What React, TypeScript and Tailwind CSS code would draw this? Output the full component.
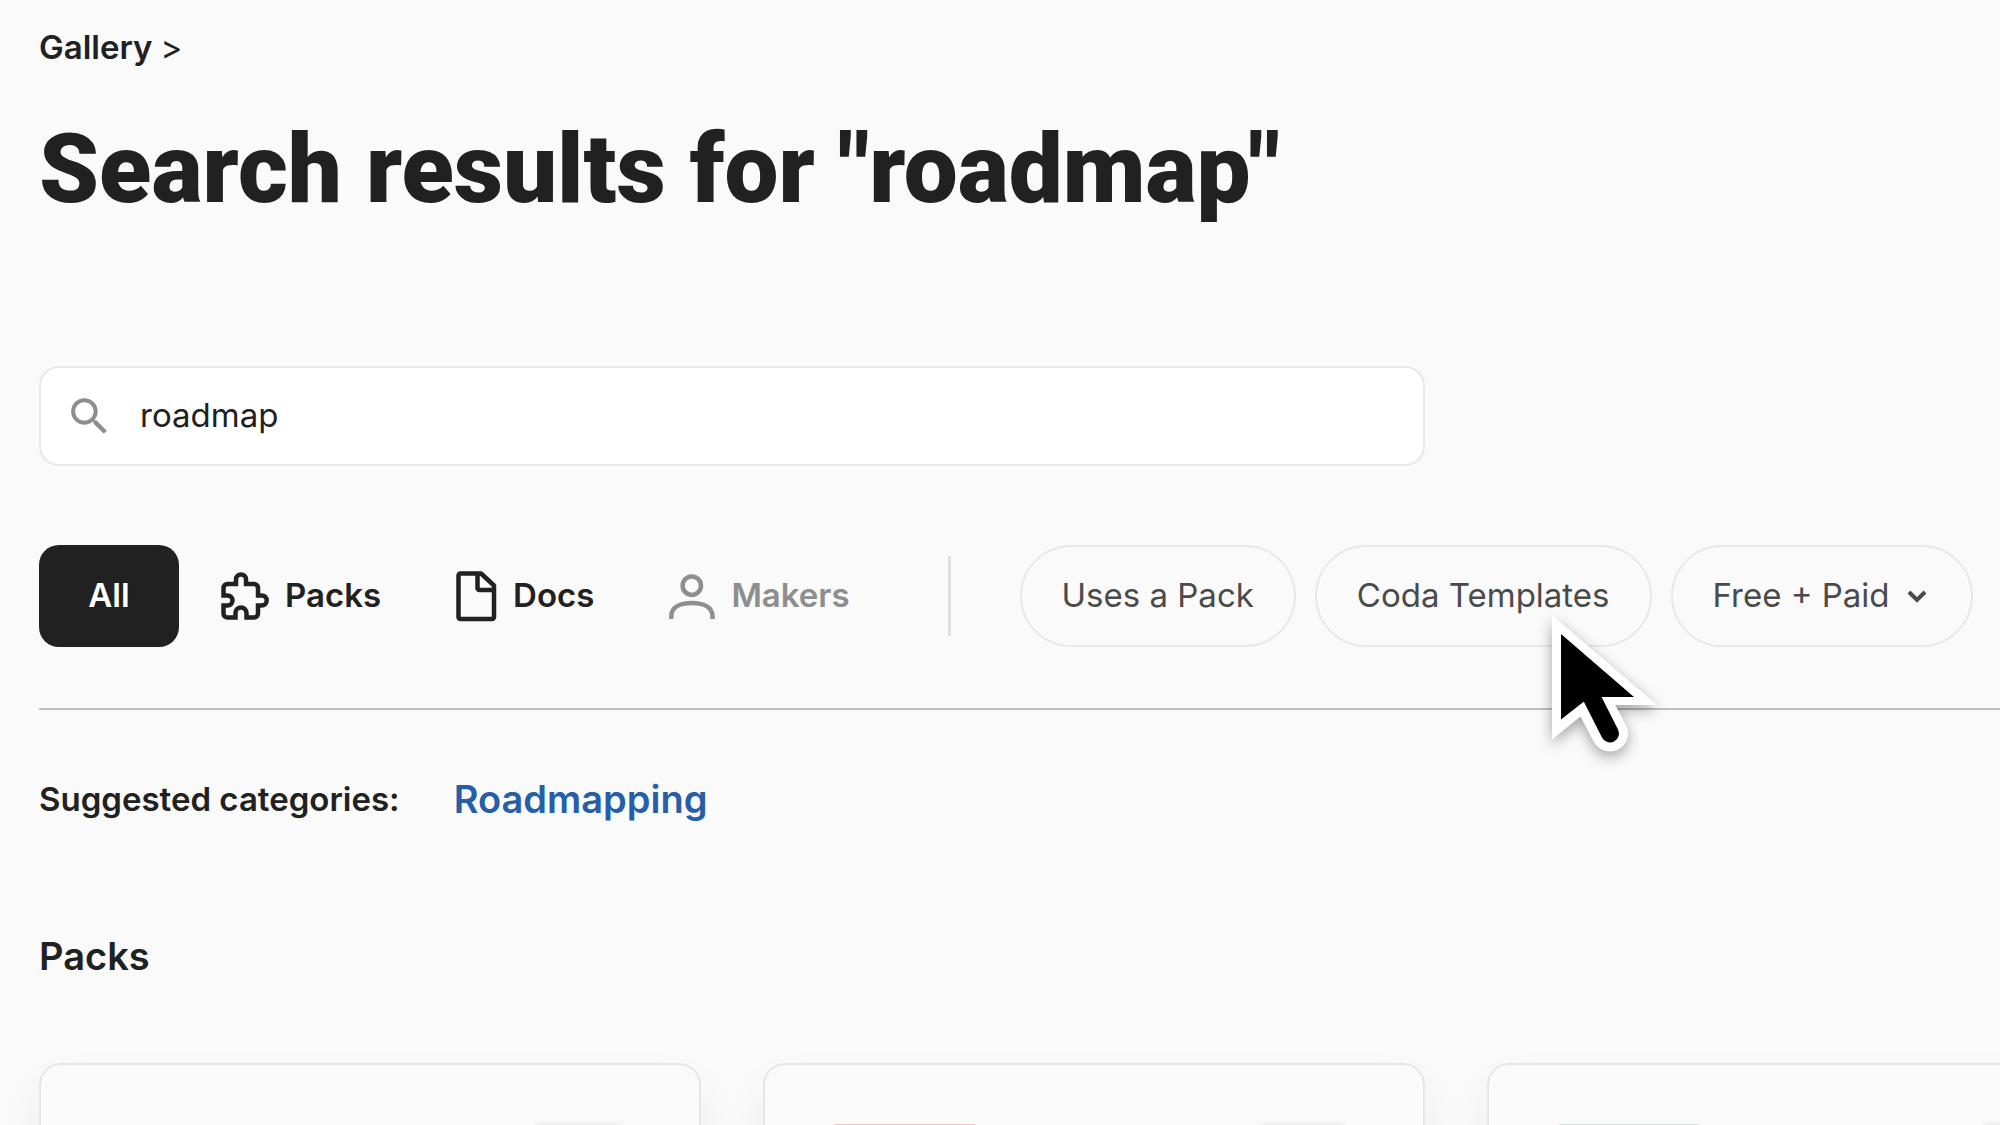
import { useState } from "react";
import type { ReactNode } from "react";
import { MdSearch } from "react-icons/md";

type Tab = { id: string; label: string; icon?: ReactNode; muted?: boolean };

function PuzzleIcon() {
  return (
    <svg width="48" height="48" viewBox="0 0 48 48" fill="none" stroke="currentColor" strokeWidth="4.5" aria-hidden="true">
      <path d="M2.5 23.5V16a4 4 0 0 1 4-4H15V7.5a5 5 0 0 1 10 0V12h8a4 4 0 0 1 4 4v7.5h3.7a5 5 0 0 1 0 10H37v8a4 4 0 0 1-4 4h-7.5V41a5.5 5.5 0 0 0-11 0v4.5h-8a4 4 0 0 1-4-4v-8H6.5a5 5 0 0 0 0-10z" />
    </svg>
  );
}

function DocIcon() {
  return (
    <svg width="41" height="51" viewBox="0 0 41 51" fill="none" stroke="currentColor" strokeWidth="4.5" strokeLinejoin="round" aria-hidden="true">
      <path d="M25 2.5H4.5a2 2 0 0 0-2 2V46a2 2 0 0 0 2 2H36a2 2 0 0 0 2-2V14.5z" />
      <path d="M21.5 2.5V17a2 2 0 0 0 2 2H38" />
    </svg>
  );
}

function PersonIcon() {
  return (
    <svg width="46" height="46" viewBox="0 0 46 46" fill="none" stroke="currentColor" strokeWidth="4.5" aria-hidden="true">
      <circle cx="22.8" cy="12.7" r="9.2" />
      <path d="M2.3 46v-2.5C2.3 34 11 30 22.8 30s20.7 4 20.7 13.5V46" />
    </svg>
  );
}

const tabs: Tab[] = [
  { id: "packs", label: "Packs", icon: <PuzzleIcon /> },
  { id: "docs", label: "Docs", icon: <DocIcon /> },
  { id: "makers", label: "Makers", icon: <PersonIcon />, muted: true },
];

// colour of the tile on each pack card
const cards = [
  { id: 1, tile: "bg-transparent" },
  { id: 2, tile: "bg-[#f3c3c0]" },
  { id: 3, tile: "bg-[#cfe8dc]" },
];

function Pointer() {
  return (
    <svg
      className="pointer-events-none absolute top-[600px] left-[1535px] overflow-visible"
      width="130"
      height="170"
      viewBox="1535 600 130 170"
      aria-hidden="true"
    >
      <g className="drop-shadow-[0_5px_7px_rgba(0,0,0,0.35)]">
        <path d="M1552 615V739.5L1581 716 1594 742.5" fill="#fff" />
        <path d="M1552 615L1657 705H1615.5L1580 716z" fill="#fff" />
        <path d="M1590 696L1610 733.5" stroke="#fff" strokeWidth="36" strokeLinecap="round" />
      </g>
      <path d="M1561 634V719.5L1584 701.5 1601 697H1634z" fill="#000" />
      <path d="M1592 698L1610 733.5" stroke="#000" strokeWidth="18" strokeLinecap="round" />
    </svg>
  );
}

export default function App() {
  const [query, setQuery] = useState("roadmap");
  const [price, setPrice] = useState("all");

  return (
    <div className="relative h-screen overflow-hidden bg-[#fafafa] pl-[39px] font-['Inter',sans-serif] text-[#212121]">
      {/* the results grid runs past the right edge of the window */}
      <main className="w-[calc(100%+149px)] pt-[27px]">
        <nav aria-label="Breadcrumb" className="flex gap-2 text-[33px] leading-[40px]">
          <a href="#gallery" className="font-semibold">Gallery</a>
          <span>&gt;</span>
        </nav>

        <h1 className="mt-[54px] font-['Roboto',sans-serif] text-[96px] leading-[96px] font-black">
          Search results for "roadmap"
        </h1>

        <form className="mt-[149px] grid grid-cols-3 gap-[62px]" onSubmit={(e) => e.preventDefault()}>
          <label className="col-span-2 flex h-[100px] items-center gap-[26px] rounded-[20px] border-2 border-[#e8e8e8] bg-white px-6">
            <MdSearch size={49} className="shrink-0 text-[#8e8e8e]" aria-hidden="true" />
            <input
              type="text"
              aria-label="Search the gallery"
              value={query}
              onChange={(e) => setQuery(e.target.value)}
              className="min-w-0 flex-1 bg-transparent text-[33px] outline-none"
            />
          </label>
        </form>

        <div className="mt-[79px] flex h-[102px] items-center text-[33px]">
          <button type="button" className="h-full w-[140px] rounded-[20px] bg-[#212121] font-semibold text-white">
            All
          </button>
          <div className="ml-[42px] flex items-center gap-[75px]">
            {tabs.map((t) => (
              <button
                key={t.id}
                type="button"
                className={`flex items-center gap-4 font-semibold ${t.muted ? "text-[#8e8e8e]" : ""}`}
              >
                {t.icon}
                {t.label}
              </button>
            ))}
          </div>
          <div className="ml-[98px] h-20 w-[3px] bg-[#e0e0e0]" />
          <div className="ml-[69px] flex h-full gap-[19px] text-[#4a4a4a]">
            <button type="button" className="rounded-full border-2 border-[#e8e8e8] px-10">Uses a Pack</button>
            <button type="button" className="rounded-full border-2 border-[#e8e8e8] px-10">Coda Templates</button>
            <label className="flex items-center gap-4 rounded-full border-2 border-[#e8e8e8] pr-11 pl-10">
              <select
                aria-label="Price"
                value={price}
                onChange={(e) => setPrice(e.target.value)}
                className="appearance-none bg-transparent outline-none"
              >
                <option value="all">Free + Paid</option>
                <option value="free">Free</option>
                <option value="paid">Paid</option>
              </select>
              <svg width="20" height="13" viewBox="0 0 20 13" fill="none" stroke="currentColor" strokeWidth="4" aria-hidden="true">
                <path d="M2 2l8 8 8-8" />
              </svg>
            </label>
          </div>
        </div>

        <hr className="mt-[61px] border-t-2 border-[#bdbdbd]" />

        <div className="mt-[67px] flex items-center gap-[54px] leading-[44px] font-semibold">
          <span className="text-[33px]">Suggested categories:</span>
          <a href="#roadmapping" className="text-[38px] text-[#265ea8]">Roadmapping</a>
        </div>

        <section>
          <h2 className="mt-[111px] text-[38px] leading-[48px] font-semibold">Packs</h2>
          <div className="mt-[83px] grid grid-cols-3 gap-[62px]">
            {cards.map((c) => (
              <article
                key={c.id}
                className="flex h-[480px] items-start justify-between rounded-[22px] border-2 border-[#e6e6e6] bg-[#fafafa] px-[68px] pt-[59px] shadow-[0_24px_48px_rgba(0,0,0,0.06)]"
              >
                <div className={`h-[144px] w-[144px] rounded-sm ${c.tile}`} />
                <div className="mr-2 h-12 w-[90px] rounded-lg bg-[#e2e2e2] blur-[2px]" />
              </article>
            ))}
          </div>
        </section>
      </main>
      <Pointer />
    </div>
  );
}
